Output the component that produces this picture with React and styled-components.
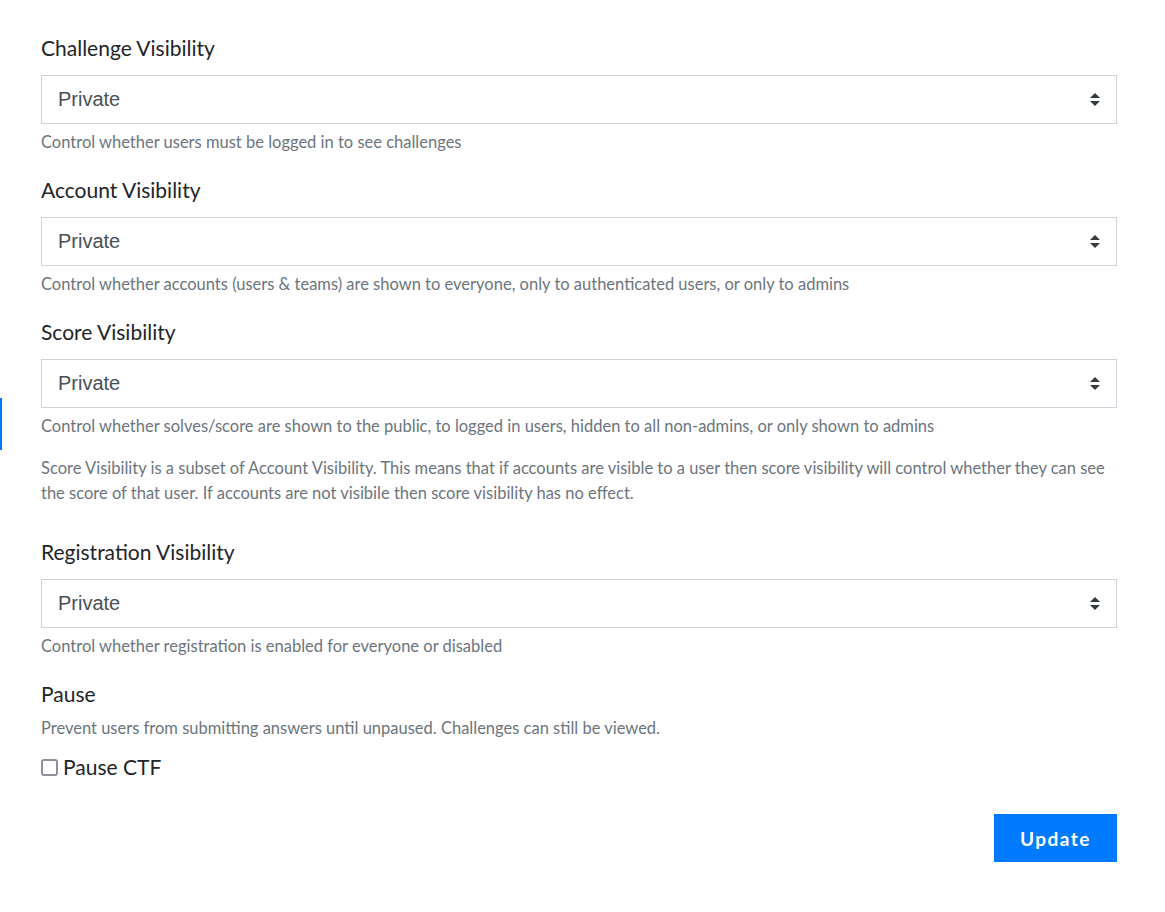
import React from 'react';
import styled, { createGlobalStyle } from 'styled-components';

const GlobalStyle = createGlobalStyle`
  html, body {
    margin: 0;
    padding: 0;
    background: #ffffff;
  }
  body {
    font-family: Lato, "Noto Sans", sans-serif;
    color: #212529;
  }
`;

const SPage = styled.div`
  position: relative;
  width: 1165px;
  min-height: 912px;
  box-sizing: border-box;
  padding: 33px 48px 40px 41px;
`;

const SActiveMark = styled.div`
  position: absolute;
  left: 0;
  top: 398px;
  width: 2px;
  height: 52px;
  background: #007bff;
`;

const SGroup = styled.div`
  display: flex;
  flex-direction: column;
  margin-bottom: ${(p) => p.$gap ?? 21}px;
`;

const SLabel = styled.label`
  font-size: 21px;
  line-height: 30px;
  color: #212529;
  margin-bottom: ${(p) => p.$mb ?? 12}px;
`;

const SSelectBox = styled.div`
  display: flex;
  align-items: center;
  justify-content: space-between;
  height: 49px;
  box-sizing: border-box;
  padding: 0 16px;
  border: 1px solid #ced4da;
  background: #ffffff;
  font-family: "Liberation Sans", Arial, sans-serif;
  font-size: 20px;
  color: #495057;
`;

const SHelp = styled.small`
  display: block;
  margin-top: ${(p) => p.$mt ?? 6}px;
  font-size: 16.5px;
  line-height: 24px;
  color: #6c757d;
`;

const SNote = styled.p`
  margin: 18px 0 0;
  font-size: 16.5px;
  line-height: 25px;
  color: #6c757d;
`;

const SCheckRow = styled.label`
  display: flex;
  align-items: center;
  gap: 5px;
  margin-top: 12px;
  font-size: 21px;
  line-height: 30px;
  color: #212529;
`;

const SCheckBox = styled.span`
  display: inline-block;
  width: 13px;
  height: 13px;
  border: 2px solid #8f8f9d;
  border-radius: 3px;
  background: #ffffff;
  margin-top: 1px;
`;

const SFooter = styled.div`
  display: flex;
  justify-content: flex-end;
  margin-top: 32px;
`;

const SButton = styled.button`
  width: 123px;
  height: 48px;
  border: none;
  background: #007bff;
  color: #ffffff;
  font-family: Lato, sans-serif;
  font-size: 19px;
  font-weight: 700;
  letter-spacing: 1.5px;
  cursor: pointer;
`;

const Caret = () => (
  <svg width="10" height="14" viewBox="0 0 10 14">
    <path d="M5 0 L10 5 L0 5 Z" fill="#343a40" />
    <path d="M0 8 L10 8 L5 13 Z" fill="#343a40" />
  </svg>
);

const Select = ({ value }) => (
  <SSelectBox>
    <span>{value}</span>
    <Caret />
  </SSelectBox>
);

export default function App() {
  return (
    <>
      <GlobalStyle />
      <SPage>
        <SActiveMark />
        <SGroup>
          <SLabel>Challenge Visibility</SLabel>
          <Select value="Private" />
          <SHelp>Control whether users must be logged in to see challenges</SHelp>
        </SGroup>
        <SGroup>
          <SLabel>Account Visibility</SLabel>
          <Select value="Private" />
          <SHelp>
            Control whether accounts (users &amp; teams) are shown to everyone, only to
            authenticated users, or only to admins
          </SHelp>
        </SGroup>
        <SGroup $gap={31}>
          <SLabel>Score Visibility</SLabel>
          <Select value="Private" />
          <SHelp>
            Control whether solves/score are shown to the public, to logged in users,
            hidden to all non-admins, or only shown to admins
          </SHelp>
          <SNote>
            Score Visibility is a subset of Account Visibility. This means that if
            accounts are visible to a user then score visibility will control whether
            they can see the score of that user. If accounts are not visibile then score
            visibility has no effect.
          </SNote>
        </SGroup>
        <SGroup>
          <SLabel>Registration Visibility</SLabel>
          <Select value="Private" />
          <SHelp>Control whether registration is enabled for everyone or disabled</SHelp>
        </SGroup>
        <SGroup $gap={0}>
          <SLabel $mb={0}>Pause</SLabel>
          <SHelp $mt={7}>
            Prevent users from submitting answers until unpaused. Challenges can still be
            viewed.
          </SHelp>
          <SCheckRow>
            <SCheckBox />
            Pause CTF
          </SCheckRow>
        </SGroup>
        <SFooter>
          <SButton>Update</SButton>
        </SFooter>
      </SPage>
    </>
  );
}
